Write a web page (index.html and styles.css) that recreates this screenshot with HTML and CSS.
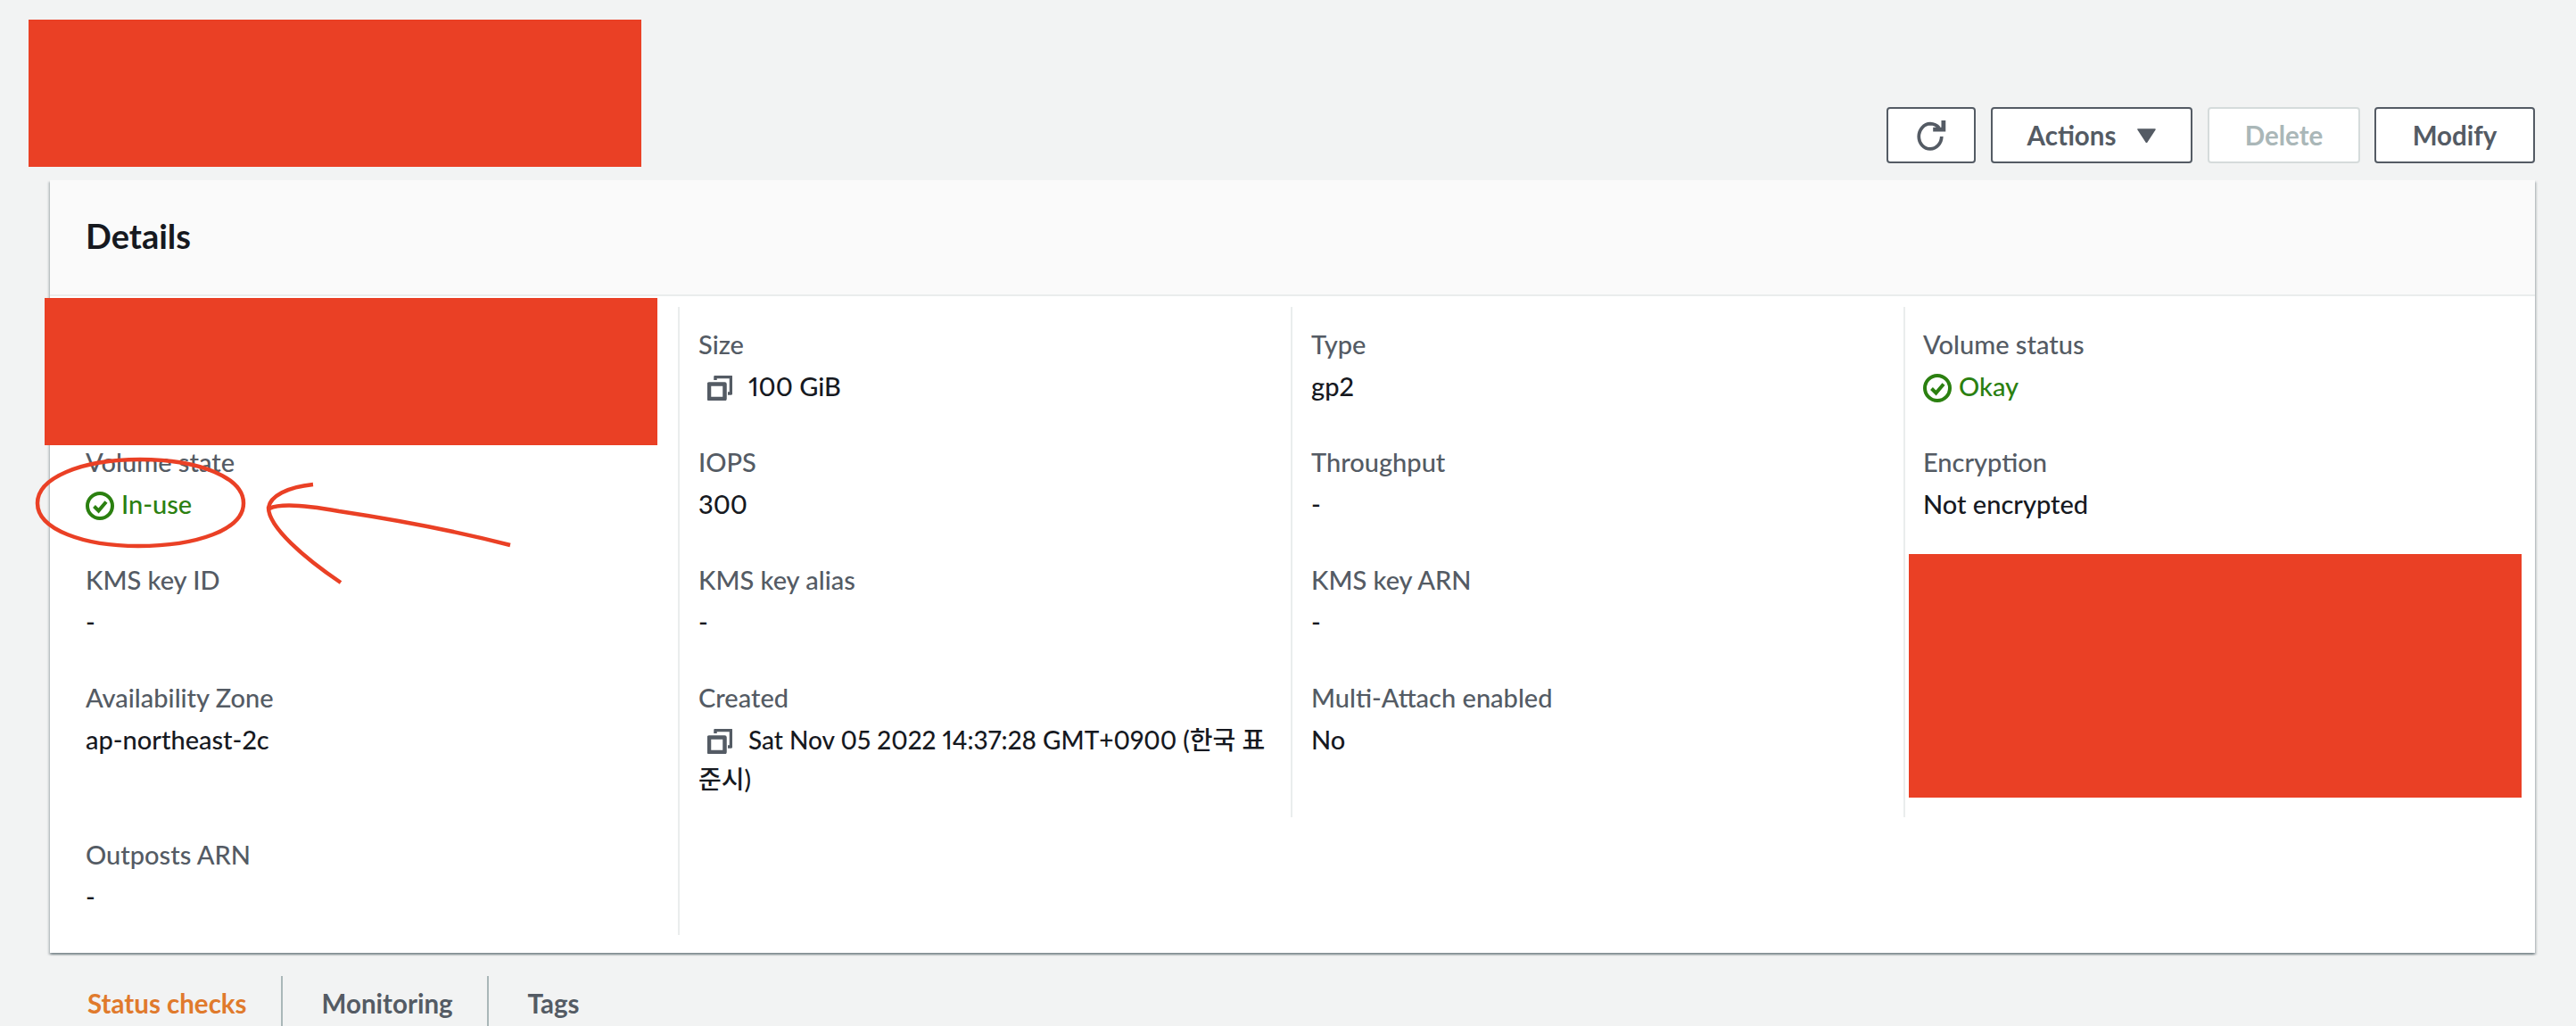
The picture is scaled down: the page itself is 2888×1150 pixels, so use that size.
FILE: index.html
```html
<!DOCTYPE html>
<html lang="en">
<head>
<meta charset="utf-8">
<title>Volume details</title>
<link rel="stylesheet" href="styles.css">
</head>
<body>
<div class="page">
  <header class="toolbar">
    <button class="btn btn-icon" aria-label="Refresh">
      <svg class="icon-refresh" viewBox="0 0 32 32"><path d="M25.500 8A13 13 0 0 0 16 3.500C9.500 3.500 4 9.500 4 17s5.500 13 12 13 12-6 12-13" fill="none" stroke="#545b64" stroke-width="3.500"/><path d="M19 9.500h11V0" fill="none" stroke="#545b64" stroke-width="4.500"/></svg>
    </button>
    <button class="btn btn-actions">Actions<svg class="caret" viewBox="0 0 21 16"><path d="M1 1h19l-9.500 14.500z" fill="#545b64" stroke="#545b64" stroke-width="1.500" stroke-linejoin="round"/></svg></button>
    <button class="btn btn-disabled">Delete</button>
    <button class="btn btn-modify">Modify</button>
  </header>

  <section class="card">
    <div class="card-head"><h2>Details</h2></div>
    <div class="grid">
      <div class="cell first"></div>
      <div class="cell">
        <div class="label">Size</div>
        <div class="value"><svg class="copy" viewBox="0 0 28 28"><use href="#copy-glyph"/></svg>100 GiB</div>
      </div>
      <div class="cell"><div class="label">Type</div><div class="value">gp2</div></div>
      <div class="cell last">
        <div class="label">Volume status</div>
        <div class="value ok"><svg class="check" viewBox="0 0 32 32"><use href="#check-glyph"/></svg>Okay</div>
      </div>

      <div class="cell first">
        <div class="label">Volume state</div>
        <div class="value ok"><svg class="check" viewBox="0 0 32 32"><use href="#check-glyph"/></svg>In-use</div>
      </div>
      <div class="cell"><div class="label">IOPS</div><div class="value">300</div></div>
      <div class="cell"><div class="label">Throughput</div><div class="value">-</div></div>
      <div class="cell last"><div class="label">Encryption</div><div class="value">Not encrypted</div></div>

      <div class="cell first"><div class="label">KMS key ID</div><div class="value">-</div></div>
      <div class="cell"><div class="label">KMS key alias</div><div class="value">-</div></div>
      <div class="cell"><div class="label">KMS key ARN</div><div class="value">-</div></div>
      <div class="cell last"></div>

      <div class="cell first tall"><div class="label">Availability Zone</div><div class="value">ap-northeast-2c</div></div>
      <div class="cell tall">
        <div class="label">Created</div>
        <div class="value value-date"><svg class="copy" viewBox="0 0 28 28"><use href="#copy-glyph"/></svg>Sat Nov 05 2022 14:37:28 GMT+0900 (한국 표준시)</div>
      </div>
      <div class="cell tall"><div class="label">Multi-Attach enabled</div><div class="value">No</div></div>
      <div class="cell last tall"></div>

      <div class="cell first"><div class="label">Outposts ARN</div><div class="value">-</div></div>
    </div>
  </section>

  <nav class="tabs">
    <a class="tab active">Status checks</a>
    <a class="tab">Monitoring</a>
    <a class="tab">Tags</a>
  </nav>

  <div class="redact redact-title"></div>
  <div class="redact redact-id"></div>
  <div class="redact redact-side"></div>

  <svg class="markup" viewBox="0 0 620 200" aria-hidden="true">
    <path d="M157 9C225 9 273 30 273 58 273 88 220 106 155 106 95 106 42 88 42 58 42 30 90 9 157 9z" />
    <path d="M351 37C322 40 303 50 301 63 301 85 342 120 382 147"/>
    <path d="M302 64C314 58 342 60 380 67 440 76 510 89 572 105"/>
  </svg>
</div>

<svg class="defs" aria-hidden="true">
  <defs>
    <g id="copy-glyph">
      <path d="M2 9.500h17.500V26H2z" fill="none" stroke="#545b64" stroke-width="4.500" stroke-linejoin="round"/>
      <path d="M9 5V1.500h17.500V20H23" fill="none" stroke="#545b64" stroke-width="3.500" stroke-linejoin="round"/>
    </g>
    <g id="check-glyph">
      <circle cx="16" cy="16" r="14" fill="none" stroke="currentColor" stroke-width="4"/>
      <path d="M9.500 16.500l5 5 8.500-10" fill="none" stroke="currentColor" stroke-width="4"/>
    </g>
  </defs>
</svg>
</body>
</html>
```
FILE: styles.css
```css
* { box-sizing: border-box; }
html, body { margin: 0; height: 100%; }
body {
  background: #f2f3f3;
  color: #16191f;
  font-family: "Lato", "Noto Sans CJK KR", sans-serif;
  font-size: 29px;
  font-variant-numeric: proportional-nums;
  font-weight: 500;
  line-height: 44px;
  overflow: hidden;
}
.page { position: relative; height: 1150px; overflow: hidden; }

.toolbar {
  display: flex;
  justify-content: flex-end;
  gap: 16px;
  height: 202px;
  padding: 120px 46px 0 0;
}
.btn {
  display: inline-flex;
  align-items: center;
  justify-content: center;
  height: 63px;
  padding: 0;
  background: #fff;
  border: 2px solid #545b64;
  border-radius: 4px;
  color: #545b64;
  font: 700 29.5px/44px "Lato", sans-serif;
}
.btn-icon { width: 100px; margin-right: 1px; padding-right: 3px; }
.btn-actions { width: 226px; margin-right: 1px; }
.btn-modify { width: 180px; }
.btn-disabled { width: 171px; border-color: #d5dbdb; color: #aab7b8; }
.icon-refresh { width: 34px; height: 34px; overflow: visible; }
.caret { width: 21px; height: 16px; margin-left: 24px; }

.card {
  margin: 0 46px 0 56px;
  background: #fff;
  box-shadow: 0 2px 2px 0 rgba(0, 28, 36, .3), 2px 2px 2px 0 rgba(0, 28, 36, .15), -2px 2px 2px 0 rgba(0, 28, 36, .15);
  height: 866px;
}
.card-head {
  display: flex;
  align-items: center;
  height: 130px;
  padding: 0 0 4px 40px;
  background: #fafafa;
  border-bottom: 2px solid #eaeded;
}
.card-head h2 { margin: 0; font: 700 38px/44px "Lato", sans-serif; color: #16191f; }

.grid {
  display: grid;
  grid-template-columns: 706px 687px 687px 1fr;
  padding-top: 12px;
}
.cell {
  height: 132px;
  padding: 20px 20px 0 21px;
  border-right: 2px solid #eaeded;
}
.cell.first { padding-left: 40px; }
.cell.last { padding-left: 20px; border-right: 0; }
.cell.tall { height: 176px; }
.label { color: #545b64; }
.value { margin-top: 3px; color: #16191f; }
.value.ok { color: #2b8010; }
.value-date { font-size: 28px; }
.copy { width: 28px; height: 28px; margin: 0 18px 0 10px; vertical-align: -5px; }
.check { width: 32px; height: 32px; margin-right: 8px; vertical-align: -7px; }

.tabs { display: flex; margin-top: 26px; padding-left: 54px; height: 56px; }
.tab { padding: 9px 38px 0 44px; font-weight: 700; font-size: 29.5px; color: #545b64; border-right: 2px solid #aab7b8; }
.tab:last-child { border-right: 0; }
.tab.active { color: #e07a2c; }

.redact { position: absolute; background: #ea4025; }
.redact-title { left: 32px; top: 22px; width: 687px; height: 165px; }
.redact-id { left: 50px; top: 334px; width: 687px; height: 165px; }
.redact-side { left: 2140px; top: 621px; width: 687px; height: 273px; }

.markup { position: absolute; left: 0; top: 506px; width: 620px; height: 200px; overflow: visible; }
.markup path { fill: none; stroke: #ea4025; stroke-width: 4.500; }
.defs { position: absolute; width: 0; height: 0; }
```
